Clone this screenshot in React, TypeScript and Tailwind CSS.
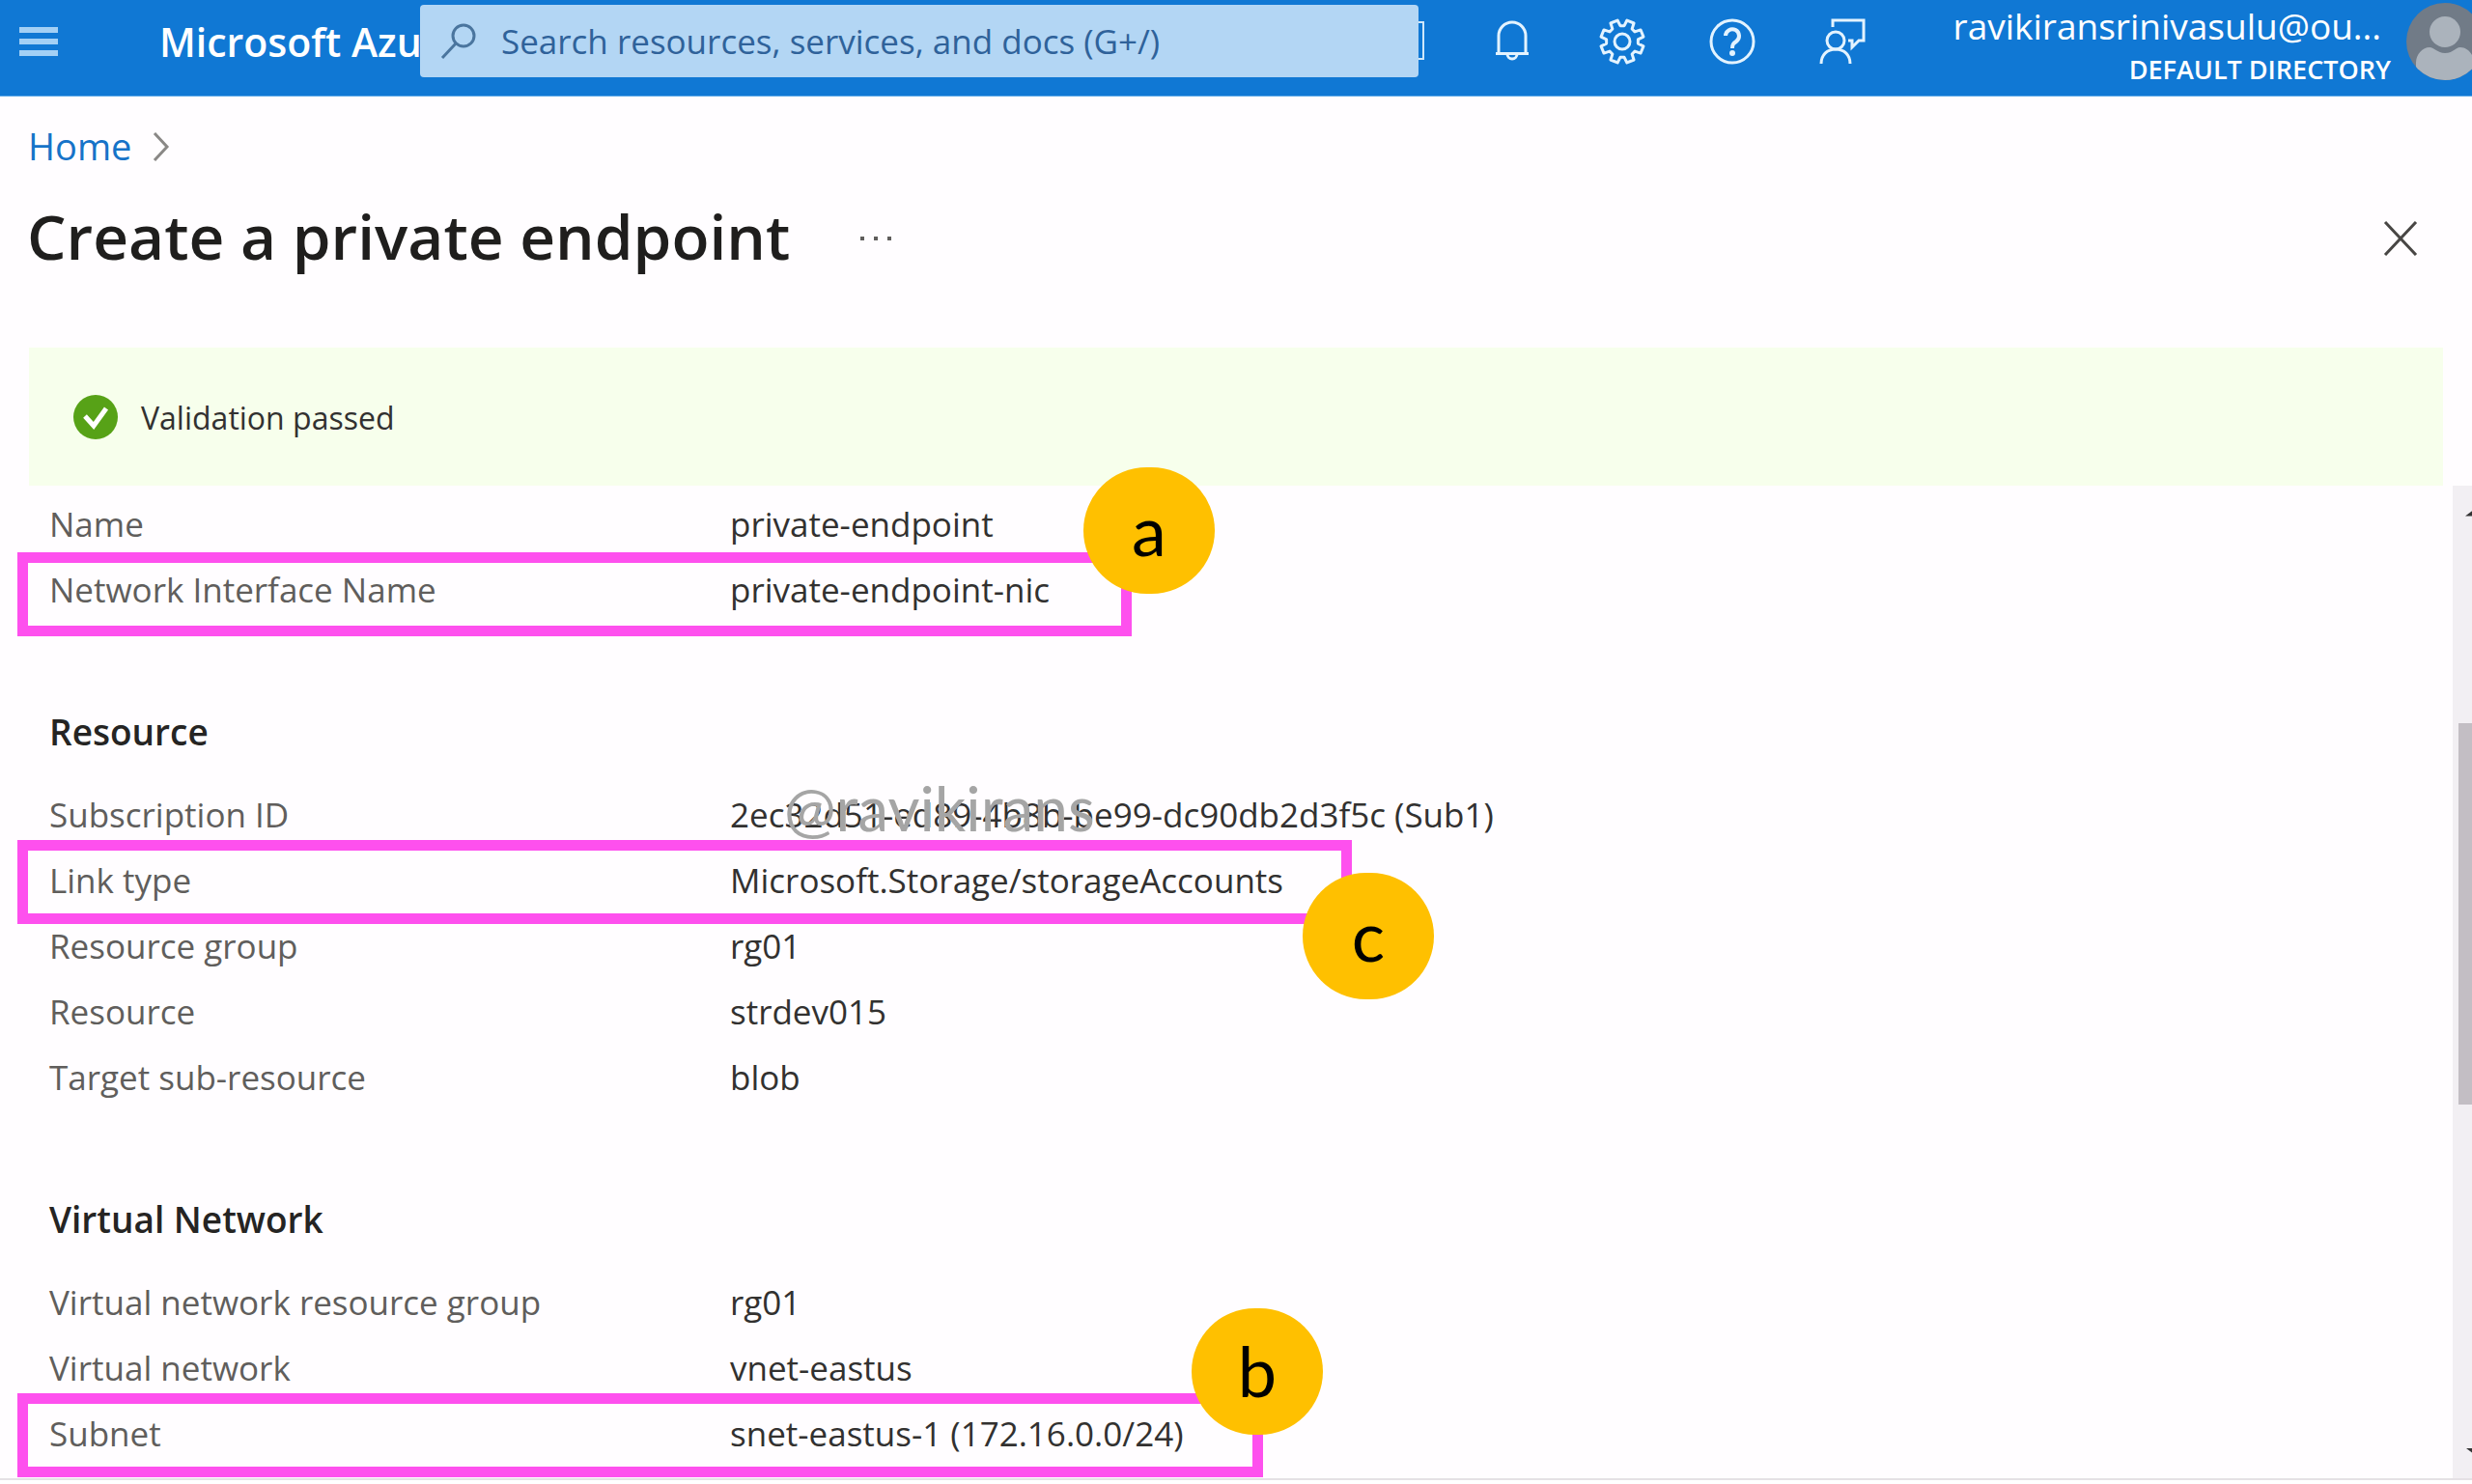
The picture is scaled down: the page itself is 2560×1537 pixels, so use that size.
import React from "react";

const font = "font-['Open_Sans',sans-serif]";

type Row = { label: string; value: string; mark?: { letter: string; box: string; dot: string } };
type Section = { title?: string; rows: Row[] };

const sections: Section[] = [
  {
    rows: [
      { label: "Name", value: "private-endpoint" },
      {
        label: "Network Interface Name",
        value: "private-endpoint-nic",
        mark: { letter: "a", box: "-top-[5px] w-[1154px]", dot: "left-[1071px] -top-[93px]" },
      },
    ],
  },
  {
    title: "Resource",
    rows: [
      { label: "Subscription ID", value: "2ec32d51-ed89-4b8b-be99-dc90db2d3f5c (Sub1)" },
      {
        label: "Link type",
        value: "Microsoft.Storage/storageAccounts",
        mark: { letter: "c", box: "-top-2 w-[1382px]", dot: "left-[1298px] top-[26px]" },
      },
      { label: "Resource group", value: "rg01" },
      { label: "Resource", value: "strdev015" },
      { label: "Target sub-resource", value: "blob" },
    ],
  },
  {
    title: "Virtual Network",
    rows: [
      { label: "Virtual network resource group", value: "rg01" },
      { label: "Virtual network", value: "vnet-eastus" },
      {
        label: "Subnet",
        value: "snet-eastus-1 (172.16.0.0/24)",
        mark: { letter: "b", box: "-top-2 w-[1290px]", dot: "left-[1183px] -top-[96px]" },
      },
    ],
  },
];

function gearPath(cx: number, cy: number, outer: number, inner: number, teeth: number) {
  const pts: string[] = [];
  const step = (Math.PI * 2) / teeth;
  for (let i = 0; i < teeth; i++) {
    const a = (i + 0.5) * step - Math.PI / 2;
    const offs: [number, number][] = [
      [-0.34, inner],
      [-0.22, outer],
      [0.22, outer],
      [0.34, inner],
    ];
    for (const [o, r] of offs) {
      pts.push(`${(cx + r * Math.cos(a + o * step)).toFixed(2)},${(cy + r * Math.sin(a + o * step)).toFixed(2)}`);
    }
  }
  return `M${pts.join("L")}Z`;
}

function TopIcon({ label, children }: { label: string; children: React.ReactNode }) {
  return (
    <button type="button" aria-label={label} className="flex w-[114px] shrink-0 justify-center">
      <svg viewBox="0 0 52 52" className="size-13" fill="none" stroke="#e3f3ff" strokeWidth="3">
        {children}
      </svg>
    </button>
  );
}

function TopBar() {
  return (
    <header className="flex h-[100px] items-start border-b border-[#5ea9e8] bg-[#1078d4] pl-5 text-white">
      <button type="button" aria-label="Show portal menu" className="mt-7 flex w-10 shrink-0 flex-col gap-[6px]">
        <span className="h-[6px] bg-[#a3d0f5]" />
        <span className="h-[6px] bg-[#a3d0f5]" />
        <span className="h-[6px] bg-[#a3d0f5]" />
      </button>
      <a
        href="#"
        className="ml-[105px] mt-[18px] w-[270px] shrink-0 overflow-hidden whitespace-nowrap text-[41px] leading-[50px] font-semibold"
      >
        Microsoft Azure
      </a>
      <label className="mt-[5px] flex h-[75px] min-w-0 flex-1 items-center rounded-sm bg-[#b3d6f4] pl-5">
        <svg viewBox="0 0 40 40" className="size-10 shrink-0" fill="none" stroke="#4a759e" strokeWidth="3">
          <circle cx="25" cy="14" r="11" />
          <path d="M17 22L3 37" />
        </svg>
        <input
          type="text"
          aria-label="Search"
          placeholder="Search resources, services, and docs (G+/)"
          className="ml-6 min-w-0 flex-1 bg-transparent pt-[2px] text-[35px] placeholder:text-[#2f629a] placeholder:opacity-100"
        />
      </label>
      <div className="mt-[22px] h-10 w-[6px] shrink-0 border-2 border-l-0 border-[#cfe7fa]" />
      <nav aria-label="Portal tools" className="ml-[34px] mt-[17px] flex shrink-0">
        <TopIcon label="Notifications">
          <path d="M12 38V20a14 14 0 0 1 28 0v18M9 38.500h34" />
          <path d="M21 39a5 5 0 0 0 10 0" />
        </TopIcon>
        <TopIcon label="Settings">
          <path d={gearPath(26, 26, 22.500, 16.500, 8)} strokeLinejoin="round" />
          <circle cx="26" cy="26" r="8" />
        </TopIcon>
        <TopIcon label="Help">
          <circle cx="26" cy="26" r="22" />
          <path d="M19 20a7 7 0 1 1 11 6c-3 2-4 3-4 7" strokeWidth="4" />
          <circle cx="26" cy="38" r="3" fill="#e3f3ff" stroke="none" />
        </TopIcon>
        <TopIcon label="Feedback">
          <circle cx="19" cy="25" r="9" />
          <path d="M4 49c0-9 6-15 15-15s15 6 15 15" />
          <path d="M16 11V4h32v21h-5l-7 7v-7h-4" />
        </TopIcon>
      </nav>
      <button type="button" className="ml-[52px] mt-1 w-[459px] shrink-0 text-right">
        <span className="block pr-[10px] text-[37px] leading-[46px] whitespace-nowrap">ravikiransrinivasulu@ou...</span>
        <span className="block text-[27px] leading-[44px] font-semibold">DEFAULT DIRECTORY</span>
      </button>
      <div className="ml-4 mt-[3px] w-[68px] shrink-0 overflow-hidden">
        <svg viewBox="0 0 80 80" className="h-20 w-20">
          <clipPath id="avatar">
            <circle cx="40" cy="40" r="40" />
          </clipPath>
          <g clipPath="url(#avatar)">
            <rect width="80" height="80" fill="#717b87" />
            <path d="M10 80V62c0-9 7-16 14-16 5 0 8 6 16 6s11-6 16-6c7 0 14 7 14 16v18z" fill="#abb3bc" />
            <circle cx="40" cy="30" r="16" fill="#abb3bc" />
          </g>
        </svg>
      </div>
    </header>
  );
}

function DetailRow({ row }: { row: Row }) {
  return (
    <div className="relative flex h-[68px] items-center">
      <dt className="w-[705px] shrink-0 text-[#605e5c]">{row.label}</dt>
      <dd className="whitespace-nowrap text-[#323130]">{row.value}</dd>
      {row.mark && (
        <div
          aria-hidden="true"
          className={`absolute -left-[33px] h-[87px] border-[11px] border-[#fe50ee] ${row.mark.box}`}
        />
      )}
      {row.mark && (
        <span
          className={`absolute z-10 flex h-[131px] w-[136px] items-center justify-center rounded-full bg-[#ffc000] pb-1 font-['Lato',sans-serif] text-[72px] text-black ${row.mark.dot}`}
        >
          {row.mark.letter}
        </span>
      )}
    </div>
  );
}

export default function App() {
  return (
    <div className={`flex min-h-screen flex-col overflow-hidden bg-[#fffdff] ${font}`}>
      <TopBar />
      <nav aria-label="Breadcrumb" className="flex h-[103px] items-center gap-[22px] pl-[29px] text-[38px]">
        <a href="#" className="text-[#1673c8]">
          Home
        </a>
        <svg viewBox="0 0 18 30" className="h-[30px] w-[18px]" fill="none" stroke="#8a8886" strokeWidth="3">
          <path d="M2 1l13 14L2 29" />
        </svg>
      </nav>
      <div className="flex h-[157px] items-start pl-7">
        <h1 className="text-[64px] leading-[84px] font-semibold text-[#1f1e1d]">Create a private endpoint</h1>
        <button type="button" aria-label="More options" className="ml-[73px] mt-[42px] flex gap-[10px]">
          <span className="size-1 bg-[#605e5c]" />
          <span className="size-1 bg-[#605e5c]" />
          <span className="size-1 bg-[#605e5c]" />
        </button>
        <button type="button" aria-label="Close" className="mr-14 ml-auto mt-[26px]">
          <svg viewBox="0 0 36 36" className="size-9" fill="none" stroke="#484644" strokeWidth="3">
            <path d="M2 1l32 34M34 1L2 35" />
          </svg>
        </button>
      </div>
      <div role="status" className="mr-[30px] ml-[30px] flex h-[143px] items-center gap-6 bg-[#f7ffec] pl-[46px]">
        <svg viewBox="0 0 46 46" className="size-[46px]">
          <circle cx="23" cy="23" r="23" fill="#57a217" />
          <path d="M12 22l9 10 13-18" fill="none" stroke="#fff" strokeWidth="5" />
        </svg>
        <span className="pt-[2px] text-[32px] text-[#323130]">Validation passed</span>
      </div>
      <div className="flex h-[1028px]">
        <main className="relative min-w-0 flex-1 pl-[51px] pt-[6px] text-[35px]">
          {sections.map((s, i) => (
            <section key={i} className="mb-[70px]">
              {s.title && (
                <h2 className="h-[95px] pt-[18px] text-[37px] leading-[50px] font-semibold text-[#252423]">{s.title}</h2>
              )}
              <dl>
                {s.rows.map((r) => (
                  <DetailRow key={r.label} row={r} />
                ))}
              </dl>
            </section>
          ))}
          <span className="absolute top-[286px] left-[812px] font-['Lato',sans-serif] text-[64px] text-[#a5a5a5]">
            @ravikirans
          </span>
        </main>
        <div aria-hidden="true" className="flex w-5 flex-col items-end overflow-hidden bg-[#f2eff3]">
          <svg viewBox="0 0 8 8" className="mt-6 h-2 w-[7px] shrink-0">
            <path d="M0 8L8 2V8z" fill="#333" />
          </svg>
          <div className="mt-[214px] h-[395px] w-[14px] shrink-0 bg-[#c3bec4]" />
          <svg viewBox="0 0 8 8" className="mt-auto mb-6 h-2 w-[6px] shrink-0">
            <path d="M0 0H8V6z" fill="#333" />
          </svg>
        </div>
      </div>
      <div className="flex-1 border-t-2 border-[#e5e1e5] bg-white" />
    </div>
  );
}
